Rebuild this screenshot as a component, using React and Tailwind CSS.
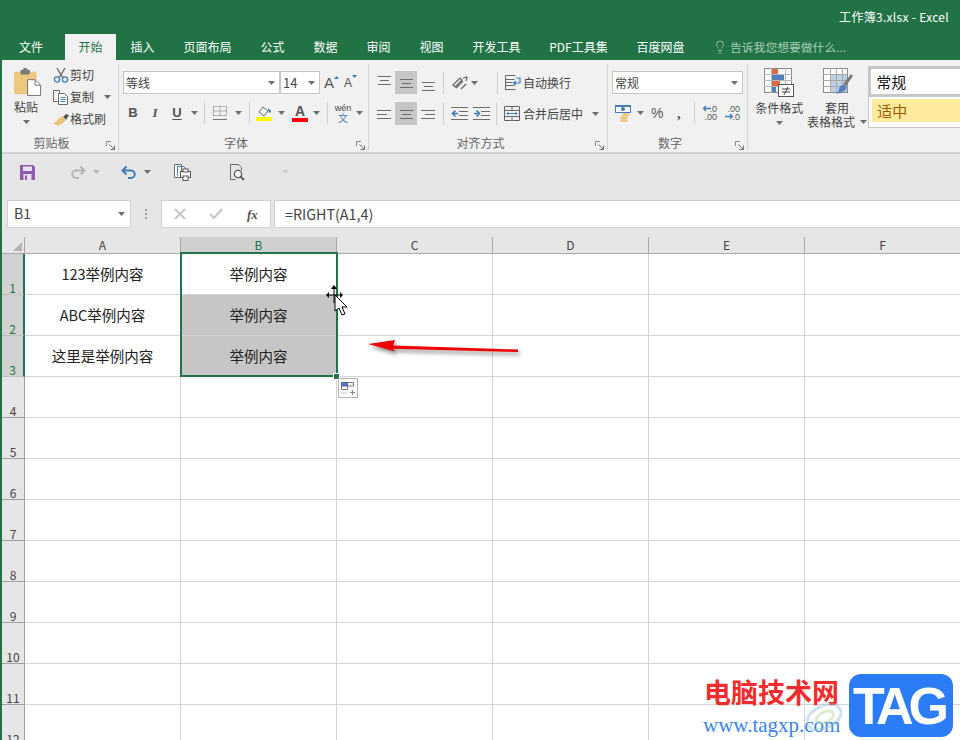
import React from 'react';
import { Lightbulb } from 'lucide-react';

const tabs = [
    { label: '文件', w: 'w-[65px] pr-[3px]' },
    { label: '开始', w: 'w-[51px]', active: true },
    { label: '插入', w: 'w-[53px]' },
    { label: '页面布局', w: 'w-[77px]' },
    { label: '公式', w: 'w-[53px]' },
    { label: '数据', w: 'w-[53px]' },
    { label: '审阅', w: 'w-[53px]' },
    { label: '视图', w: 'w-[53px]' },
    { label: '开发工具', w: 'w-[77px]' },
    { label: 'PDF工具集', w: 'w-[87px]' },
    { label: '百度网盘', w: 'w-[77px]' },
];

const cols = ['A', 'B', 'C', 'D', 'E', 'F'];
const rows = [1, 2, 3, 4, 5, 6, 7, 8, 9, 10, 11, 12];
const cellText = {
    A1: '123举例内容',
    B1: '举例内容',
    A2: 'ABC举例内容',
    B2: '举例内容',
    A3: '这里是举例内容',
    B3: '举例内容',
};

const Caret = ({ className = '' }) => (
    <svg width="7" height="4" viewBox="0 0 7 4" className={`shrink-0 ${className}`}>
        <path d="M0 0h7L3.5 4z" fill="#6e6e6e" />
    </svg>
);

const Launcher = () => (
    <svg width="9" height="9" viewBox="0 0 9 9" className="shrink-0">
        <path d="M.5 5V.5H5" fill="none" stroke="#8a8a8a" />
        <path d="M3.5 3.5l4.5 4.5M8.5 4.5v4h-4" fill="none" stroke="#6e6e6e" />
    </svg>
);

const Sep = ({ h = 'h-[22px]' }) => <div className={`w-px ${h} bg-[#d0d0d0] shrink-0`} />;

const GroupLabel = ({ children }) => (
    <div className="absolute -bottom-[1px] left-0 right-[15px] flex items-center justify-center text-[12px] leading-[16px] text-[#666]">
        {children}
    </div>
);

const LauncherSlot = () => (
    <div className="absolute right-[3px] bottom-0 flex">
        <Launcher />
    </div>
);

const Lines = ({ kind, v }) => {
    const ys = v === 'top' ? [3, 7, 11] : v === 'bottom' ? [9, 13, 17] : [6, 10, 14];
    const spans = {
        left: [[1, 15], [1, 11], [1, 15]],
        center: [[2, 15], [4, 13], [2, 15]],
        right: [[1, 15], [5, 15], [1, 15]],
    }[kind];
    return (
        <svg width="16" height="20" viewBox="0 0 16 20">
            {ys.map((y, i) => (
                <path key={y} d={`M${spans[i][0]} ${y}.5H${spans[i][1]}`} stroke="#6b6b6b" />
            ))}
        </svg>
    );
};

const AlignBtn = ({ kind = 'center', v, active }) => (
    <div className={`w-[22px] h-[23px] flex items-center justify-center ${active ? 'bg-[#c6c6c6]' : ''}`}>
        <Lines kind={kind} v={v} />
    </div>
);

const PasteIcon = () => (
    <svg width="28" height="28" viewBox="0 0 30 30" className="ml-[3px]">
        <rect x="0" y="4" width="24" height="24" rx="1.5" fill="#edc87e" />
        <rect x="7" y="2" width="10" height="5" rx="1" fill="#7a7a7a" />
        <rect x="10" y="0" width="4" height="3" fill="#7a7a7a" />
        <path d="M14.5 12.5h8l6 6v11h-14z" fill="#fff" stroke="#6e6e6e" />
        <path d="M22.5 12.5v6h6" fill="none" stroke="#6e6e6e" />
    </svg>
);

const ScissorsIcon = () => (
    <svg width="16" height="16" viewBox="0 0 16 16">
        <path d="M4 1l6 10M12 1L6 11" stroke="#6a6a6a" strokeWidth="1.4" fill="none" />
        <circle cx="4" cy="12.5" r="2.6" fill="none" stroke="#3f7cba" strokeWidth="1.3" />
        <circle cx="12" cy="12.5" r="2.6" fill="none" stroke="#3f7cba" strokeWidth="1.3" />
    </svg>
);

const CopyIcon = () => (
    <svg width="16" height="15" viewBox="0 0 16 15">
        <path d="M.5.5h6v11h-6z" fill="#fff" stroke="#6a6a6a" />
        <path d="M5.5 3.5h6l3 3v8h-9z" fill="#fff" stroke="#6a6a6a" />
        <path d="M7.5 7.5h5M7.5 9.5h5M7.5 11.5h5" stroke="#3f7cba" />
    </svg>
);

const BrushIcon = () => (
    <svg width="17" height="15" viewBox="0 0 17 15">
        <path d="M10 5l3-3 3 1-3 5z" fill="#555" />
        <path d="M10 4l3 4-3 3-5 3-5-3 3-1 3-4z" fill="#eac47c" />
    </svg>
);

const BorderIcon = () => (
    <svg width="14" height="14" viewBox="0 0 14 14">
        <path d="M.5.5h13v9M.5.5v9M.5 5h13M7 .5v9M.5 9.5h13" stroke="#777" strokeDasharray="1 1" fill="none" />
        <path d="M0 13.5h14" stroke="#777" />
    </svg>
);

const FillIcon = () => (
    <svg width="17" height="17" viewBox="0 0 17 17">
        <path d="M3 7l4-5 5 4-4 5z" fill="#fff" stroke="#666" />
        <path d="M12 4c2 0 3 1 3 3l-2 1z" fill="#3f7cba" />
        <rect x="0" y="12" width="16" height="4" fill="#ffff00" />
    </svg>
);

const FontColorIcon = () => (
    <div className="flex flex-col items-center w-[16px]">
        <span className="text-[14px] leading-[13px] font-bold text-[#555] font-['Liberation_Sans',sans-serif]">A</span>
        <div className="w-[16px] h-[4px] bg-[#ff0000]" />
    </div>
);

const OrientIcon = () => (
    <svg width="16" height="16" viewBox="0 0 16 16">
        <path d="M1 10l7-7 2 2-7 7zM4 13l7-7" stroke="#666" fill="none" strokeWidth="1.2" />
        <path d="M9 14l5-5M11 3l4-1-1 4" stroke="#666" fill="none" strokeWidth="1.2" />
    </svg>
);

const IndentIcon = ({ flip }) => (
    <svg width="17" height="13" viewBox="0 0 17 13">
        <path d="M0 .5h17M8 4.5h9M8 8.5h9M0 12.5h17" stroke="#6e6e6e" />
        {flip ? (
            <path d="M1 6.5h4M3.5 3.5l3 3-3 3" stroke="#3f7cba" strokeWidth="1.6" fill="none" />
        ) : (
            <path d="M2 6.5h5M4.5 3.5l-3 3 3 3" stroke="#3f7cba" strokeWidth="1.6" fill="none" />
        )}
    </svg>
);

const WrapIcon = () => (
    <svg width="17" height="15" viewBox="0 0 17 15">
        <path d="M.5.5h10M.5.5v14h10M.5 4.5h9M.5 7.5h7M.5 10.5h9" stroke="#666" fill="none" />
        <path d="M11 3h4v5h-6M11 6L8.5 8l2.5 2" stroke="#3f7cba" fill="none" strokeWidth="1.2" />
    </svg>
);

const MergeIcon = () => (
    <svg width="16" height="15" viewBox="0 0 16 15">
        <path d="M.5.5h15v14H.5zM.5 4.5h15M.5 10.5h15M8 .5v4M8 10.5v4" stroke="#666" fill="none" />
        <path d="M3 7.5h10M4.5 6L3 7.5 4.5 9M11.5 6L13 7.5 11.5 9" stroke="#3f7cba" fill="none" />
    </svg>
);

const CurrencyIcon = () => (
    <svg width="16" height="17" viewBox="0 0 16 17">
        <rect x="0.5" y="0.5" width="15" height="7" fill="#fff" stroke="#3f7cba" />
        <circle cx="8" cy="4" r="2" fill="#3f7cba" />
        <rect x="1" y="0" width="14" height="2" fill="#3f7cba" />
        <ellipse cx="11" cy="9.5" rx="4" ry="1.5" fill="#edc87e" />
        <ellipse cx="9" cy="12.5" rx="4" ry="1.5" fill="#edc87e" />
        <ellipse cx="9" cy="15.5" rx="4" ry="1.5" fill="#edc87e" />
    </svg>
);

const DecIcon = ({ more }) => (
    <div className="relative w-[15px] h-[16px] flex flex-col items-end text-[9px] leading-[8px] text-[#555] font-['Liberation_Sans',sans-serif]">
        <span>{more ? '.00' : '.0'}</span>
        <span>{more ? '.0' : '.00'}</span>
        <svg width="9" height="7" viewBox="0 0 9 7" className={`absolute left-0 ${more ? 'top-[8px]' : 'top-0'}`}>
            {more ? (
                <path d="M0 3.5h7M5 1l2.5 2.5L5 6" stroke="#3f7cba" strokeWidth="1.3" fill="none" />
            ) : (
                <path d="M9 3.5H2M4 1L1.5 3.5 4 6" stroke="#3f7cba" strokeWidth="1.3" fill="none" />
            )}
        </svg>
    </div>
);

const CondFormatIcon = () => (
    <svg width="30" height="30" viewBox="0 0 30 30">
        <rect x="0.5" y="0.5" width="27" height="24" fill="#fff" stroke="#8a8a8a" />
        <path d="M7.5 0v25M21.5 0v25M0 6.5h28M0 12.5h28M0 18.5h28" stroke="#b8b8b8" />
        <rect x="8" y="1" width="6" height="5" fill="#de6a45" />
        <rect x="8" y="7" width="12" height="5" fill="#4f81bd" />
        <rect x="8" y="13" width="8" height="5" fill="#de6a45" />
        <rect x="8" y="19" width="4" height="5" fill="#4f81bd" />
        <rect x="14.5" y="16.5" width="15" height="12" fill="#fff" stroke="#555" />
        <path d="M18 21h8M18 24h8M24 19l-4 8" stroke="#444" />
    </svg>
);

const TableFormatIcon = () => (
    <svg width="31" height="30" viewBox="0 0 31 30" className="ml-[4px]">
        <rect x="0.5" y="0.5" width="24" height="24" fill="#fff" stroke="#8a8a8a" />
        <rect x="7" y="7" width="17" height="17" fill="#bcd0e8" />
        <path d="M7.5 0v25M13.5 0v25M19.5 0v25M0 6.5h25M0 12.5h25M0 18.5h25" stroke="#a8a8a8" />
        <path d="M20 16l8-10 2 2-7 10z" fill="#7a7a7a" />
        <path d="M20 17c3 0 4 2 3 4-2 3-6 4-10 5 2-2 3-3 3-5 0-2 2-4 4-4z" fill="#4f81bd" />
    </svg>
);

const SaveIcon = () => (
    <svg width="15" height="15" viewBox="0 0 15 15">
        <path d="M0 0h13l2 2v13H0z" fill="#8e5bae" />
        <rect x="3" y="1.5" width="9" height="4.5" fill="#e9dff0" />
        <rect x="3.5" y="9" width="8" height="6" fill="#e9dff0" />
        <rect x="5" y="10.5" width="2" height="4.5" fill="#8e5bae" />
    </svg>
);

const UndoIcon = ({ color, flip }) => (
    <svg width="15" height="13" viewBox="0 0 15 13" className={flip ? '-scale-x-100' : ''}>
        <path d="M2 4.5h8a3.7 3.7 0 010 7.5H7" fill="none" stroke={color} strokeWidth="2" />
        <path d="M5.5 0.5L1.5 4.5l4 4" fill="none" stroke={color} strokeWidth="2" />
    </svg>
);

const PrintPreviewIcon = () => (
    <svg width="17" height="17" viewBox="0 0 17 17">
        <path d="M.5.5h7v13h-7z" fill="#fff" stroke="#6a6a6a" />
        <path d="M3.5 2.5h6l2 2v3" fill="none" stroke="#3f7cba" />
        <path d="M3.5 2.5v9" stroke="#3f7cba" />
        <rect x="6.5" y="7.5" width="10" height="6" fill="#fff" stroke="#555" />
        <rect x="9" y="5" width="5" height="3" fill="#fff" stroke="#555" />
        <rect x="9" y="12" width="5" height="4.5" fill="#fff" stroke="#555" />
    </svg>
);

const PreviewIcon = () => (
    <svg width="15" height="17" viewBox="0 0 15 17">
        <path d="M.5.5h8l3 3v3M.5.5v15h5" fill="none" stroke="#6a6a6a" />
        <circle cx="8" cy="10" r="3.6" fill="#fff" stroke="#555" strokeWidth="1.3" />
        <path d="M10.5 12.5l3.5 3.5" stroke="#555" strokeWidth="1.8" />
    </svg>
);

const SmallAction = ({ icon, label, caret }) => (
    <div className="h-[22px] flex items-center text-[12px] text-[#444]">
        <div className="w-[18px] flex justify-center">{icon}</div>
        <span>{label}</span>
        {caret && <Caret className="ml-[10px]" />}
    </div>
);

const ComboBox = ({ w, text, textClass = 'text-[12px]' }) => (
    <div className={`${w} h-[23px] bg-white border border-[#c6c6c6] flex items-center justify-between pl-[2px] pr-[4px]`}>
        <span className={`${textClass} text-[#444]`}>{text}</span>
        <Caret />
    </div>
);

const Ribbon = () => (
    <div className="h-[94px] bg-[#f1f1f1] border-b-2 border-[#d2d2d2] flex">
        {/* 剪贴板 */}
        <div className="relative w-[119px] mt-[4px] mb-[2px] border-r border-[#d4d4d4] shrink-0">
            <div className="flex">
                <div className="w-[52px] flex flex-col items-center pt-[4px]">
                    <PasteIcon />
                    <span className="text-[12px] leading-[16px] mt-[3px] text-[#444]">粘贴</span>
                    <Caret className="mt-[5px]" />
                </div>
                <div className="flex flex-col">
                    <SmallAction icon={<ScissorsIcon />} label="剪切" />
                    <SmallAction icon={<CopyIcon />} label="复制" caret />
                    <SmallAction icon={<BrushIcon />} label="格式刷" />
                </div>
            </div>
            <GroupLabel>剪贴板</GroupLabel>
            <LauncherSlot />
        </div>

        {/* 字体 */}
        <div className="relative w-[250px] pl-[4px] pt-[7px] mt-[4px] mb-[2px] border-r border-[#d4d4d4] shrink-0">
            <div className="flex items-center">
                <ComboBox w="w-[157px]" text="等线" />
                <ComboBox w="w-[40px]" text="14" textClass="text-[13px]" />
                <span className="ml-[4px] w-[20px] text-[15px] leading-[15px] text-[#555] font-['Liberation_Sans',sans-serif] flex items-start">
                    A<svg width="5" height="3" viewBox="0 0 5 3" className="mt-[1px]"><path d="M0 3h5L2.5 0z" fill="#3f7cba" /></svg>
                </span>
                <span className="w-[18px] text-[12px] leading-[15px] pt-[2px] text-[#555] font-['Liberation_Sans',sans-serif] flex items-start">
                    A<svg width="5" height="3" viewBox="0 0 5 3" className="-mt-[1px]"><path d="M0 0h5L2.5 3z" fill="#3f7cba" /></svg>
                </span>
            </div>
            <div className="flex items-center h-[24px] mt-[7px] font-['Liberation_Sans',sans-serif] text-[#555]">
                <span className="w-[22px] ml-[-1px] text-center text-[13px] font-bold">B</span>
                <span className="w-[22px] text-center text-[13px] italic font-['Liberation_Serif',serif] font-bold">I</span>
                <span className="w-[22px] text-center text-[13px] font-bold underline underline-offset-2">U</span>
                <Caret className="ml-[3px] mr-[6px]" />
                <Sep />
                <div className="w-[21px] ml-[3px] flex justify-center pl-[2px]"><BorderIcon /></div>
                <Caret className="ml-[6px] mr-[7px]" />
                <Sep />
                <div className="w-[22px] ml-[3px] flex justify-center"><FillIcon /></div>
                <Caret className="ml-[3px] mr-[7px]" />
                <FontColorIcon />
                <Caret className="ml-[5px] mr-[7px]" />
                <Sep />
                <div className="w-[20px] ml-[5px] flex flex-col items-center leading-none">
                    <span className="text-[9px] text-[#444]">wén</span>
                    <span className="text-[10px] text-[#3f7cba] font-['Noto_Sans_CJK_SC',sans-serif]">文</span>
                </div>
                <Caret className="ml-[3px]" />
            </div>
            <GroupLabel>字体</GroupLabel>
            <LauncherSlot />
        </div>

        {/* 对齐方式 */}
        <div className="relative w-[239px] pl-[4px] pt-[7px] mt-[4px] mb-[2px] border-r border-[#d4d4d4] shrink-0">
            <div className="flex items-center">
                <AlignBtn v="top" />
                <AlignBtn active />
                <AlignBtn v="bottom" />
                <div className="ml-[4px]"><Sep /></div>
                <div className="ml-[8px]"><OrientIcon /></div>
                <Caret className="ml-[3px] mr-[19px]" />
                <Sep />
                <div className="ml-[7px]"><WrapIcon /></div>
                <span className="ml-[1px] text-[12px] text-[#444]">自动换行</span>
            </div>
            <div className="flex items-center mt-[8px]">
                <AlignBtn kind="left" />
                <AlignBtn kind="center" active />
                <AlignBtn kind="right" />
                <div className="ml-[4px]"><Sep /></div>
                <div className="ml-[7px]"><IndentIcon /></div>
                <div className="ml-[5px]"><IndentIcon flip /></div>
                <div className="ml-[6px]"><Sep /></div>
                <div className="ml-[7px]"><MergeIcon /></div>
                <span className="ml-[3px] text-[12px] text-[#444]">合并后居中</span>
                <Caret className="ml-[9px]" />
            </div>
            <GroupLabel>对齐方式</GroupLabel>
            <LauncherSlot />
        </div>

        {/* 数字 */}
        <div className="relative w-[140px] pl-[4px] pt-[7px] mt-[4px] mb-[2px] border-r border-[#d4d4d4] shrink-0">
            <ComboBox w="w-[131px]" text="常规" />
            <div className="flex items-center h-[24px] mt-[7px]">
                <div className="ml-[3px]"><CurrencyIcon /></div>
                <Caret className="ml-[6px]" />
                <span className="ml-[7px] w-[18px] text-[14px] text-[#555] font-['Liberation_Sans',sans-serif]">%</span>
                <span className="ml-[8px] w-[10px] text-[15px] font-bold text-[#555] font-['Liberation_Serif',serif]">,</span>
                <div className="ml-[7px]"><Sep /></div>
                <div className="ml-[7px]"><DecIcon /></div>
                <div className="ml-[8px]"><DecIcon more /></div>
            </div>
            <GroupLabel>数字</GroupLabel>
            <LauncherSlot />
        </div>

        {/* 样式 */}
        <div className="flex pt-[8px] min-w-0">
            <div className="w-[56px] ml-[4px] flex flex-col items-center text-[12px] leading-[14px] text-[#444]">
                <CondFormatIcon />
                <span className="mt-[3px]">条件格式</span>
                <Caret className="mt-[6px]" />
            </div>
            <div className="w-[62px] flex flex-col items-center text-[12px] leading-[14px] text-[#444]">
                <TableFormatIcon />
                <span className="mt-[3px]">套用</span>
                <span className="whitespace-nowrap flex items-center">
                    表格格式<Caret className="ml-[5px]" />
                </span>
            </div>
            <div className="w-[94px] h-[62px] ml-[1px] -mt-[2px] bg-white border border-r-0 border-[#c6c6c6] flex flex-col">
                <div className="h-[31px] -mt-[1px] -ml-[1px] border-[3px] border-r-0 border-[#c6c6c6] bg-white text-[15px] leading-[25px] pl-[5px] text-[#111]">常规</div>
                <div className="h-[23px] ml-[3px] mt-[2px] bg-[#ffeb9c] text-[15px] leading-[23px] pl-[5px] text-[#9c5700]">适中</div>
            </div>
        </div>
    </div>
);

const QuickBar = () => (
    <div className="h-[44px] bg-[#e6e6e6] flex items-center pl-[20px] pb-[8px]">
        <SaveIcon />
        <div className="ml-[36px]"><UndoIcon color="#b4b4b4" flip /></div>
        <Caret className="ml-[7px] opacity-40" />
        <div className="ml-[21px]"><UndoIcon color="#3f7cba" /></div>
        <Caret className="ml-[8px]" />
        <div className="ml-[23px]"><PrintPreviewIcon /></div>
        <div className="ml-[39px]"><PreviewIcon /></div>
        <Caret className="ml-[37px] opacity-20" />
    </div>
);

const FormulaBar = () => (
    <div className="h-[39px] bg-[#e6e6e6] flex pl-[7px] pt-[2px] text-[14px]">
        <div className="w-[124px] h-[28px] bg-white border border-[#d0d0d0] flex items-center justify-between pl-[6px] pr-[5px] pb-[1px] text-[#444]">
            <span>B1</span>
            <Caret />
        </div>
        <div className="w-[30px] h-[28px] flex flex-col items-center justify-center gap-[2px]">
            <div className="w-[2px] h-[2px] bg-[#a0a0a0]" />
            <div className="w-[2px] h-[2px] bg-[#a0a0a0]" />
            <div className="w-[2px] h-[2px] bg-[#a0a0a0]" />
        </div>
        <div className="w-[110px] h-[28px] bg-white border border-[#d0d0d0] flex items-center">
            <svg width="12" height="12" viewBox="0 0 12 12" className="ml-[12px]">
                <path d="M1 1l10 10M11 1L1 11" stroke="#c4c4c4" strokeWidth="1.8" />
            </svg>
            <svg width="14" height="12" viewBox="0 0 14 12" className="ml-[23px]">
                <path d="M1 6l4 4 8-9" fill="none" stroke="#c4c4c4" strokeWidth="2" />
            </svg>
            <span className="ml-[24px] text-[13px] leading-none italic font-bold text-[#555] font-['Liberation_Serif',serif]">fx</span>
        </div>
        <div className="flex-1 ml-[3px] h-[28px] bg-white border-y border-l border-[#d0d0d0] flex items-center pl-[10px] pb-[1px] text-[14.3px] text-[#444]">
            =RIGHT(A1,4)
        </div>
    </div>
);

const SheetGrid = () => (
    <div className="relative font-['Noto_Sans_CJK_SC',sans-serif]">
        <div className="flex h-[17px]">
            <div className="w-[25px] shrink-0 bg-[#e6e6e6] border-r border-b border-[#a8a8a8] flex items-end justify-end pr-[2px] pb-[2px]">
                <svg width="9" height="9" viewBox="0 0 9 9"><path d="M9 0v9H0z" fill="#b4b4b4" /></svg>
            </div>
            {cols.map((c) => (
                <div
                    key={c}
                    className={`w-[156px] shrink-0 border-r border-b flex items-center justify-center text-[12px] ${
                        c === 'B' ? 'bg-[#d0d0d0] border-[#a8a8a8] text-[#217346]' : 'bg-[#e6e6e6] border-[#a8a8a8] text-[#444]'
                    }`}
                >
                    {c}
                </div>
            ))}
        </div>
        {rows.map((r) => (
            <div key={r} className="flex h-[41px]">
                <div
                    className={`w-[25px] shrink-0 border-b flex items-end justify-center pl-[2px] text-[12px] leading-[13px] ${
                        r <= 3
                            ? 'bg-[#d2d2d2] border-[#c0c0c0] border-r-2 border-r-[#217346] text-[#217346]'
                            : 'bg-[#e6e6e6] border-[#a0a0a0] border-r border-r-[#a0a0a0] text-[#444]'
                    }`}
                >
                    {r}
                </div>
                {cols.map((c) => (
                    <div
                        key={c}
                        className={`w-[156px] shrink-0 border-r border-b border-[#d4d4d4] flex items-center justify-center text-[14.5px] text-[#222] ${
                            c === 'B' && (r === 2 || r === 3) ? 'bg-[#c6c6c6]' : 'bg-white'
                        }`}
                    >
                        {cellText[`${c}${r}`]}
                    </div>
                ))}
            </div>
        ))}

        {/* selection B1:B3 */}
        <div className="absolute left-[180px] top-[15px] w-[158px] h-[125px] border-2 border-[#217346] pointer-events-none" />
        <div className="absolute left-[333px] top-[136px] w-[5px] h-[5px] bg-[#217346] border border-white box-content" />

        {/* paste options tag */}
        <div className="absolute left-[338px] top-[141px] w-[20px] h-[20px] bg-white border border-[#b4b4b4] flex items-center justify-center">
            <svg width="14" height="13" viewBox="0 0 14 13">
                <rect x="0.5" y="0.5" width="6" height="3.5" fill="#3d7bf5" stroke="#666" />
                <path d="M6.5.5h6v3.5h-6M.5 4v3.5h6V4" fill="none" stroke="#777" />
                <path d="M.5 11h6" stroke="#888" strokeDasharray="1 1" />
                <path d="M9 10.5h5M11.5 8v5" stroke="#888" />
            </svg>
        </div>

        {/* move cursor */}
        <svg width="24" height="32" viewBox="0 0 24 32" className="absolute left-[326px] top-[48px]">
            <path d="M8 4v14M2 10h13" stroke="#000" />
            <path d="M8 0l3 4H5zM0 10l3-3v6zM17 10l-3-3v6z" fill="#000" />
            <path d="M9 10v16l4-3 3 7 3-1-3-7h5z" fill="#fff" stroke="#000" />
        </svg>

        {/* red arrow annotation */}
        <svg width="170" height="30" viewBox="0 0 170 30" className="absolute left-[360px] top-[95px] drop-shadow-[2px_3px_2px_rgba(0,0,0,0.45)]">
            <path d="M8 12L35 8l-2 5.5L158 17.5V20L33 16.8l2 2.7z" fill="#f00000" />
        </svg>

        {/* watermark */}
        <div className="absolute left-[704px] top-[438px] text-[27px] leading-[34px] font-bold text-[#f22c2c] whitespace-nowrap">
            电脑技术网
        </div>
        <div className="absolute left-[703px] top-[476px] text-[21px] leading-[24px] text-[#3a85ee] font-['Liberation_Serif',serif] whitespace-nowrap">
            www.tagxp.com
        </div>
        <svg width="40" height="30" viewBox="0 0 40 30" className="absolute left-[804px] top-[465px] opacity-40">
            <ellipse cx="20" cy="15" rx="18" ry="11" fill="none" stroke="#8fb8d8" strokeWidth="3" transform="rotate(-25 20 15)" />
            <ellipse cx="21" cy="15" rx="9" ry="5" fill="none" stroke="#a8d08d" strokeWidth="3" transform="rotate(-25 21 15)" />
        </svg>
        <div className="absolute left-[849px] top-[437px] w-[104px] h-[63px] rounded-[12px] bg-[#2b7cf6] flex items-center justify-center text-white text-[52px] leading-none font-bold tracking-[-5px] pr-[5px] font-['Liberation_Sans',sans-serif]">
            TAG
        </div>
    </div>
);

const App = () => {
    return (
        <div className="w-[960px] h-[740px] overflow-hidden bg-white relative font-['Noto_Sans_CJK_SC',sans-serif]">
            <div className="absolute left-0 top-0 bottom-0 w-[2px] bg-[#217346] z-10" />
            <div className="h-[34px] bg-[#217346] flex items-center justify-end pr-[11px] text-[12px] tracking-[0.3px] text-white">
                工作簿3.xlsx - Excel
            </div>
            <div className="h-[26px] bg-[#217346] flex text-[12px] text-white">
                {tabs.map((t) => (
                    <div
                        key={t.label}
                        className={`${t.w} shrink-0 flex items-center justify-center ${
                            t.active ? 'bg-[#f1f1f1] text-[#217346]' : ''
                        }`}
                    >
                        {t.label}
                    </div>
                ))}
                <div className="ml-[14px] flex items-center text-[#a9cdb9]">
                    <Lightbulb size={14} strokeWidth={1.5} />
                    <span className="ml-[3px] text-[11.8px]">告诉我您想要做什么...</span>
                </div>
            </div>
            <Ribbon />
            <QuickBar />
            <FormulaBar />
            <SheetGrid />
        </div>
    );
};

export default App;
